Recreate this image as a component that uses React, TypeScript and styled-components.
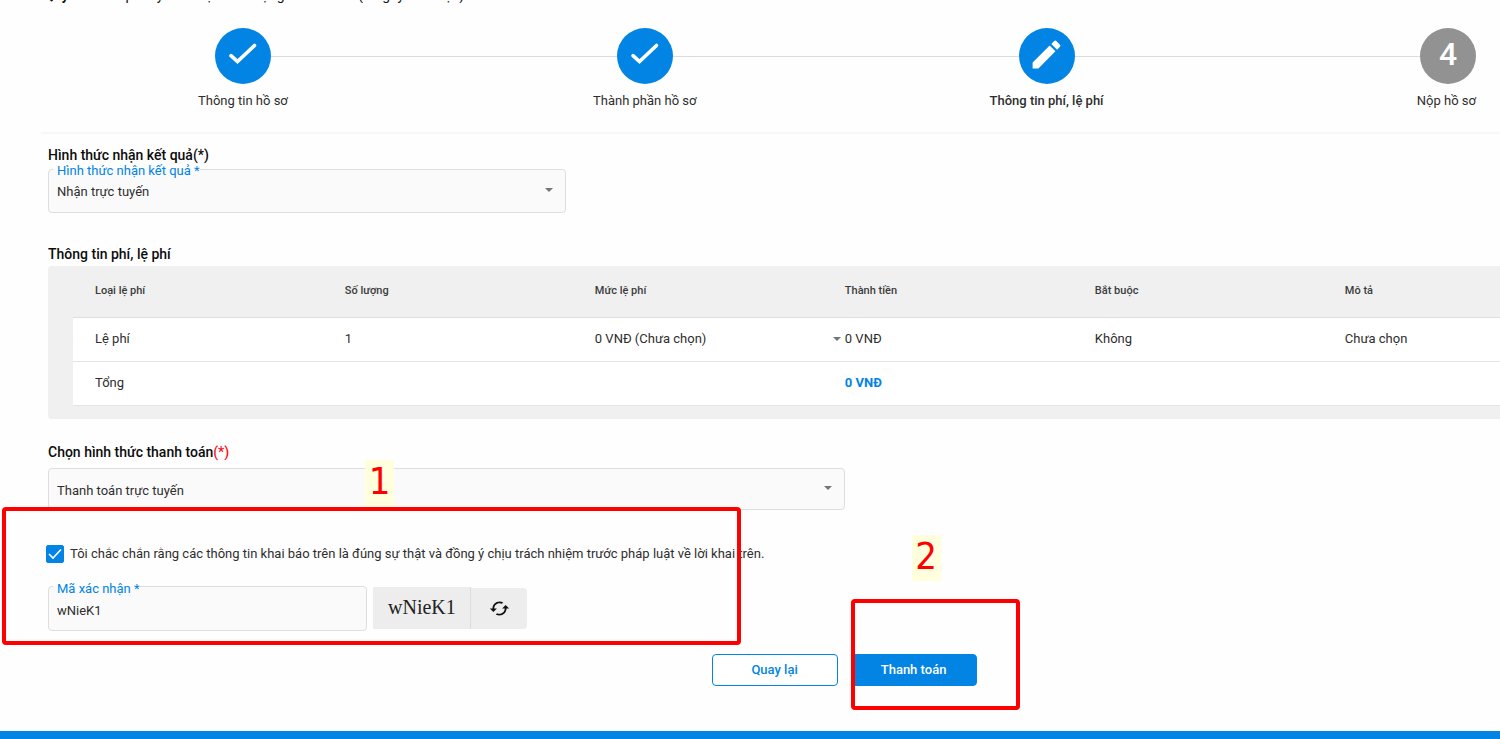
import React, { useState } from "react";
import styled, { createGlobalStyle, css } from "styled-components";
import { MdCached, MdModeEdit } from "react-icons/md";

const BLUE = "#0284e4";
const LINE = "#dedede";
const FONT = 'Roboto, "Noto Sans", sans-serif';

const GlobalStyle = createGlobalStyle`
  * { box-sizing: border-box; }
  body {
    margin: 0;
    background: #fefefe;
    color: #2e2e2e;
    font-family: ${FONT};
    font-size: 13px;
    line-height: 16px;
    overflow-x: hidden;
  }
  button, input, select { font: inherit; color: inherit; }
`;

const Page = styled.div`
  width: 100%;
`;

const ProcessStrip = styled.header`
  display: flex;
  align-items: flex-end;
  height: 3px;
  padding-left: 44px;
  overflow: hidden;
  color: #111;
  font-size: 14px;
  white-space: pre;
`;

const Stepper = styled.ol`
  display: grid;
  grid-template-columns: repeat(3, 35fr) 22fr;
  margin: 0 0 0 41px;
  padding: 25px 0 23px 1px;
  list-style: none;
  border-bottom: 2px solid #f7f7f7;
`;

const Step = styled.li<{ $last?: boolean }>`
  display: flex;
  flex-direction: column;
  align-items: ${(p) => (p.$last ? "flex-end" : "center")};
  gap: 9px;
  ${(p) => p.$last && css`padding-right: 24px;`}
`;

const StepTrack = styled.div`
  display: flex;
  align-items: center;
  align-self: stretch;
`;

const Connector = styled.span<{ $hidden?: boolean }>`
  flex: 1;
  height: 1px;
  background: ${(p) => (p.$hidden ? "transparent" : "#dcdcdc")};
`;

const StepCircle = styled.span<{ $pending?: boolean }>`
  display: flex;
  align-items: center;
  justify-content: center;
  width: 56px;
  height: 56px;
  padding-bottom: 4px;
  border-radius: 50%;
  background: ${(p) => (p.$pending ? "#929292" : BLUE)};
  color: #fff;
  font-size: 32px;
  font-weight: 500;
  line-height: 32px;
`;

const StepLabel = styled.span<{ $active?: boolean }>`
  font-weight: ${(p) => (p.$active ? 500 : 400)};
`;

const Content = styled.main`
  padding: 11px 0 45px 48px;
`;

const Heading = styled.h2`
  margin: 0;
  color: #0c0c0c;
  font-size: 14px;
  font-weight: 500;
  line-height: 20px;
`;

const Required = styled.span`
  color: #f5141c;
`;

const ReceiveField = styled.div`
  margin: -6px 0 31px;
`;

const Field = styled.fieldset<{ $width: string }>`
  width: ${(p) => p.$width};
  min-width: 0;
  margin: 0;
  padding: 0;
  border: 1px solid ${LINE};
  border-radius: 4px;
  background: #fafafa;
`;

const FieldLegend = styled.legend`
  height: 20px;
  margin-left: 4px;
  padding: 4px 0 0 4px;
  color: ${BLUE};
`;

const SelectWrap = styled.div<{ $below?: number }>`
  display: grid;
  align-items: center;
  padding-bottom: ${(p) => p.$below ?? 0}px;
`;

const Select = styled.select<{ $height: number; $inset?: boolean; $drop?: number }>`
  grid-area: 1 / 1;
  width: 100%;
  height: ${(p) => p.$height}px;
  padding: ${(p) => p.$drop ?? 0}px 24px 0 ${(p) => (p.$inset ? 8 : 0)}px;
  border: 0;
  outline: 0;
  appearance: none;
  background: transparent;
`;

const CaretIcon = styled.svg<{ $gap: number }>`
  grid-area: 1 / 1;
  justify-self: end;
  width: 8px;
  height: 4px;
  margin-right: ${(p) => p.$gap}px;
  fill: #757575;
  pointer-events: none;
`;

const TextInput = styled.input`
  display: block;
  width: 100%;
  height: 33px;
  padding: 0 8px 6px;
  border: 0;
  outline: 0;
  background: transparent;
`;

const TablePanel = styled.div`
  margin: 2px 0 23px;
  padding: 0 0 13px 25px;
  border-radius: 4px 0 0 4px;
  background: #f0f0f0;
`;

const FeeTable = styled.table`
  width: 100%;
  border-collapse: collapse;
  table-layout: fixed;
`;

const HeadCell = styled.th`
  height: 51px;
  padding: 0;
  border-bottom: 1px solid ${LINE};
  color: #3c3c3c;
  font-size: 11px;
  font-weight: 500;
  text-align: left;
  &:first-child { padding-left: 22px; }
`;

const Cell = styled.td`
  height: 44px;
  padding: 0;
  border-bottom: 1px solid #e4e4e4;
  background: #fff;
  &:first-child { padding-left: 22px; }
`;

const Total = styled.strong`
  color: ${BLUE};
  font-weight: 700;
`;

const PaymentField = styled.div`
  position: relative;
  margin-top: 6px;
`;

const Confirmation = styled.section`
  position: relative;
  padding-top: 35px;
`;

const CheckRow = styled.label`
  display: flex;
  align-items: center;
  gap: 6px;
  margin-left: -2px;
  line-height: 18px;
`;

const CheckWrap = styled.span`
  display: grid;
  width: 18px;
  height: 18px;
  place-items: center;
`;

const CheckInput = styled.input`
  grid-area: 1 / 1;
  width: 18px;
  height: 18px;
  margin: 0;
  appearance: none;
  border: 1px solid ${BLUE};
  border-radius: 2px;
  &:checked { background: ${BLUE}; }
`;

const CheckGlyph = styled.svg`
  grid-area: 1 / 1;
  fill: none;
  stroke: #fff;
  pointer-events: none;
`;

const CaptchaRow = styled.div`
  display: flex;
  align-items: flex-end;
  gap: 6px;
  margin-top: 14px;
`;

const CaptchaGroup = styled.div`
  display: flex;
  align-items: flex-end;
  margin-bottom: 2px;
`;

const CaptchaCode = styled.span`
  width: 98px;
  height: 42px;
  border-right: 1px solid #dcdcdc;
  background: #ededed;
  color: #222;
  font-family: "Liberation Serif", serif;
  font-size: 20px;
  line-height: 40px;
  text-align: center;
`;

const RefreshButton = styled.button`
  display: flex;
  align-items: center;
  justify-content: center;
  width: 56px;
  height: 41px;
  padding: 0;
  border: 0;
  border-radius: 0 4px 4px 0;
  background: #ededed;
  color: #111;
`;

const Actions = styled.div`
  display: flex;
  gap: 13px;
  margin-top: 23px;
  padding-left: 45.7%;
`;

const ActionSlot = styled.div`
  position: relative;
`;

const ActionButton = styled.button<{ $primary?: boolean }>`
  width: 126px;
  height: 32px;
  padding: 0;
  border: 1px solid ${BLUE};
  border-radius: 4px;
  background: ${(p) => (p.$primary ? BLUE : "#fff")};
  color: ${(p) => (p.$primary ? "#fff" : BLUE)};
  font-weight: 500;
`;

const Highlight = styled.div<{ $x: number; $y: number; $w: number; $h: number }>`
  position: absolute;
  left: ${(p) => p.$x}px;
  top: ${(p) => p.$y}px;
  width: ${(p) => p.$w}px;
  height: ${(p) => p.$h}px;
  border: 4px solid #fe0000;
  border-radius: 4px;
  pointer-events: none;
`;

const Marker = styled.span<{ $x: number; $y: number }>`
  position: absolute;
  left: ${(p) => p.$x}px;
  top: ${(p) => p.$y}px;
  width: 29px;
  height: 46px;
  background: #ffffdd;
  color: #fe0000;
  font-family: "DejaVu Sans Condensed", "DejaVu Sans", sans-serif;
  font-size: 38px;
  line-height: 42px;
  text-align: center;
  pointer-events: none;
`;

const FooterBar = styled.footer`
  height: 8px;
  background: ${BLUE};
`;

const Caret = ({ gap }: { gap: number }) => (
  <CaretIcon $gap={gap} viewBox="0 0 8 4" aria-hidden="true">
    <path d="M0 0h8L4 4z" />
  </CaretIcon>
);

const DoneIcon = () => (
  <svg width="30" height="24" viewBox="0 0 30 24" fill="none" stroke="#fff" strokeWidth="3.6" strokeLinecap="round" aria-hidden="true">
    <path d="M3 13.6l6.500 6L26.500 3.500" />
  </svg>
);

type StepState = "done" | "edit" | "pending";

const steps: { label: string; state: StepState }[] = [
  { label: "Thông tin hồ sơ", state: "done" },
  { label: "Thành phần hồ sơ", state: "done" },
  { label: "Thông tin phí, lệ phí", state: "edit" },
  { label: "Nộp hồ sơ", state: "pending" },
];

const columns = ["Loại lệ phí", "Số lượng", "Mức lệ phí", "Thành tiền", "Bắt buộc", "Mô tả"];
const columnWidths = ["19.05%", "17.52%", "17.52%", "17.52%", "17.52%", "10.87%"];

export default function App() {
  const [agreed, setAgreed] = useState(true);
  const [code, setCode] = useState("wNieK1");

  return (
    <Page>
      <GlobalStyle />
      <ProcessStrip>
        <b>Quy trình: </b>Cấp thay thế hoạt trên mạng Internet số (7 ngày làm việc)
      </ProcessStrip>
      <Stepper>
        {steps.map((step, i) => {
          const last = i === steps.length - 1;
          return (
            <Step key={step.label} $last={last}>
              <StepTrack>
                <Connector $hidden={i === 0} />
                <StepCircle $pending={step.state === "pending"}>
                  {step.state === "done" && <DoneIcon />}
                  {step.state === "edit" && <MdModeEdit size={37} />}
                  {step.state === "pending" && i + 1}
                </StepCircle>
                {!last && <Connector />}
              </StepTrack>
              <StepLabel $active={step.state === "edit"}>{step.label}</StepLabel>
            </Step>
          );
        })}
      </Stepper>

      <Content>
        <Heading>Hình thức nhận kết quả(*)</Heading>
        <ReceiveField>
          <Field $width="35.7%">
            <FieldLegend>
              <label htmlFor="receive">Hình thức nhận kết quả *</label>
            </FieldLegend>
            <SelectWrap $below={12}>
              <Select id="receive" $height={21} $inset $drop={4}>
                <option>Nhận trực tuyến</option>
              </Select>
              <Caret gap={12} />
            </SelectWrap>
          </Field>
        </ReceiveField>

        <Heading>Thông tin phí, lệ phí</Heading>
        <TablePanel>
          <FeeTable>
            <colgroup>
              {columnWidths.map((w, i) => (
                <col key={i} width={w} />
              ))}
            </colgroup>
            <thead>
              <tr>
                {columns.map((c) => (
                  <HeadCell key={c} scope="col">{c}</HeadCell>
                ))}
              </tr>
            </thead>
            <tbody>
              <tr>
                <Cell>Lệ phí</Cell>
                <Cell>1</Cell>
                <Cell>
                  <SelectWrap>
                    <Select $height={20} aria-label="Mức lệ phí">
                      <option>0 VNĐ (Chưa chọn)</option>
                    </Select>
                    <Caret gap={4} />
                  </SelectWrap>
                </Cell>
                <Cell>0 VNĐ</Cell>
                <Cell>Không</Cell>
                <Cell>Chưa chọn</Cell>
              </tr>
              <tr>
                <Cell>Tổng</Cell>
                <Cell />
                <Cell />
                <Cell><Total>0 VNĐ</Total></Cell>
                <Cell />
                <Cell />
              </tr>
            </tbody>
          </FeeTable>
        </TablePanel>

        <Heading>
          <label htmlFor="payment">Chọn hình thức thanh toán<Required>(*)</Required></label>
        </Heading>
        <PaymentField>
          <Field $width="54.9%">
            <SelectWrap $below={2}>
              <Select id="payment" $height={38} $inset $drop={6}>
                <option>Thanh toán trực tuyến</option>
              </Select>
              <Caret gap={12} />
            </SelectWrap>
          </Field>
          <Marker $x={317} $y={-8}>1</Marker>
        </PaymentField>

        <Confirmation>
          <CheckRow>
            <CheckWrap>
              <CheckInput type="checkbox" checked={agreed} onChange={(e) => setAgreed(e.target.checked)} />
              <CheckGlyph width="14" height="12" viewBox="0 0 14 12" strokeWidth="1.6">
                <path d="M1 6l4 4 8-8.500" />
              </CheckGlyph>
            </CheckWrap>
            Tôi chắc chắn rằng các thông tin khai báo trên là đúng sự thật và đồng ý chịu trách nhiệm trước pháp luật về lời khai trên.
          </CheckRow>
          <CaptchaRow>
            <Field $width="22%">
              <FieldLegend>
                <label htmlFor="captcha">Mã xác nhận *</label>
              </FieldLegend>
              <TextInput id="captcha" value={code} onChange={(e) => setCode(e.target.value)} />
            </Field>
            <CaptchaGroup>
              <CaptchaCode>wNieK1</CaptchaCode>
              <RefreshButton type="button" aria-label="Đổi mã">
                <MdCached size={21} />
              </RefreshButton>
            </CaptchaGroup>
          </CaptchaRow>
          <Highlight $x={-46} $y={-3} $w={739} $h={138} />
        </Confirmation>

        <Actions>
          <ActionButton type="button">Quay lại</ActionButton>
          <ActionSlot>
            <ActionButton type="button" $primary>Thanh toán</ActionButton>
            <Highlight $x={0} $y={-55} $w={169} $h={111} />
            <Marker $x={61} $y={-119}>2</Marker>
          </ActionSlot>
        </Actions>
      </Content>
      <FooterBar />
    </Page>
  );
}
